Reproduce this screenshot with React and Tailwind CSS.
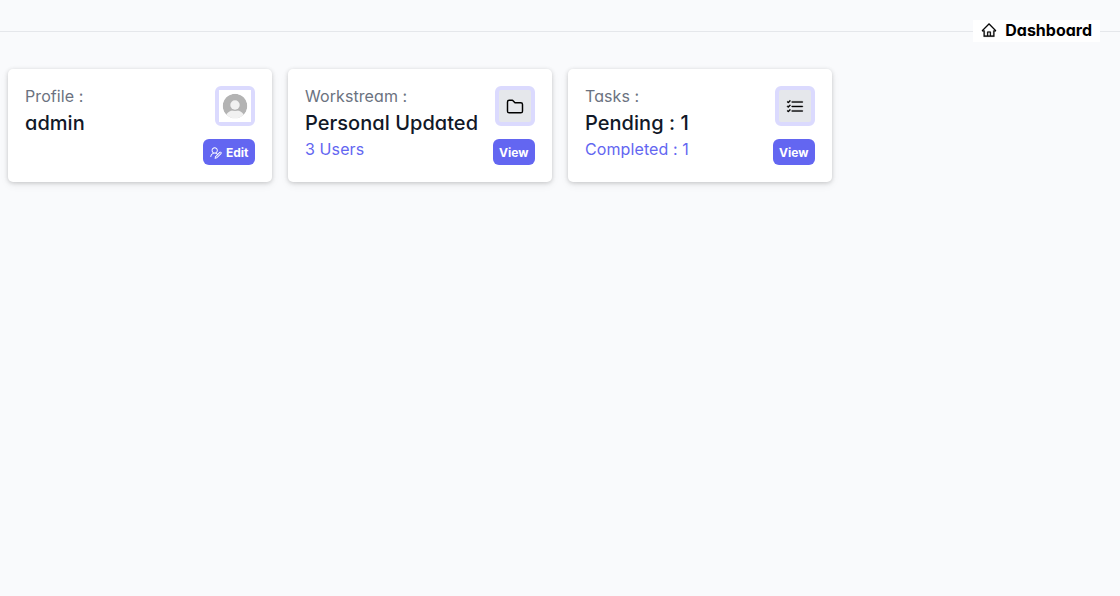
import React from "react";
import { LiaUserEditSolid } from "react-icons/lia";
import { AiOutlineHome } from "react-icons/ai";
import { TbFolder } from "react-icons/tb";
import { BsListCheck } from "react-icons/bs";

function Avatar() {
  return (
    <svg viewBox="0 0 32 32" className="size-8">
      <rect width="32" height="32" fill="#fff" />
      <clipPath id="avatar-disc">
        <circle cx="16" cy="16" r="12.3" />
      </clipPath>
      <g clipPath="url(#avatar-disc)">
        <circle cx="16" cy="16" r="12.3" fill="#b3b3b3" />
        <path d="M6 30c0-6 4-9.700 10-9.700s10 3.700 10 9.700z" fill="#f1f1f1" />
        <circle cx="16" cy="15.200" r="5.700" fill="#b3b3b3" />
        <circle cx="16" cy="15" r="4.700" fill="#f1f1f1" />
      </g>
    </svg>
  );
}

function Card({ label, title, note, icon, action }) {
  return (
    <div className="flex h-[113px] w-[264px] justify-between rounded-[5px] bg-white px-[17px] pt-4 pb-4 shadow-[0_1px_4px_rgba(0,0,0,0.18),0_3px_10px_rgba(0,0,0,0.06)]">
      <div className="flex flex-col whitespace-nowrap">
        <p className="text-base leading-[22px] tracking-[0.08px] text-[#6b7280]">{label}</p>
        <p className="mt-0.5 text-xl leading-7 font-medium tracking-[0.04px] text-[#111827]">{title}</p>
        <p className="text-base tracking-[0.1px] text-[#6366f1]">{note}</p>
      </div>
      <div className="flex flex-col items-end gap-[13px] pt-px">
        <div className="flex size-10 items-center justify-center rounded-md border-4 border-[#dbdafe] bg-[#e5e7eb] text-black">
          {icon}
        </div>
        <button className="flex h-[26px] items-center gap-[3px] rounded-md bg-[#6366f1] pt-0.5 pr-[6.500px] pl-1.5 text-xs font-bold text-white">
          {action}
        </button>
      </div>
    </div>
  );
}

export default function App() {
  return (
    <div className="min-h-screen bg-[#f9fafc] font-['Inter',sans-serif] [font-feature-settings:'cv11']">
      <header className="flex items-center pt-5">
        <div className="h-px flex-1 bg-[#e5e7eb]" />
        <h1 className="flex h-[22px] items-center gap-2 bg-white px-2 pb-0.5 text-base font-bold text-black">
          <AiOutlineHome className="stroke-black [stroke-width:16]" />
          Dashboard
        </h1>
        <div className="h-px w-5 bg-[#e5e7eb]" />
      </header>
      <main className="flex gap-4 px-2 pt-[27px]">
        <Card
          label="Profile :"
          title="admin"
          icon={<Avatar />}
          action={
            <>
              <LiaUserEditSolid size={14} />
              Edit
            </>
          }
        />
        <Card
          label="Workstream :"
          title="Personal Updated"
          note="3 Users"
          icon={<TbFolder size={20} className="mt-px [stroke-width:1.75]" />}
          action="View"
        />
        <Card
          label="Tasks :"
          title="Pending : 1"
          note="Completed : 1"
          icon={<BsListCheck size={18} className="mt-px stroke-black [stroke-width:0.35]" />}
          action="View"
        />
      </main>
    </div>
  );
}
